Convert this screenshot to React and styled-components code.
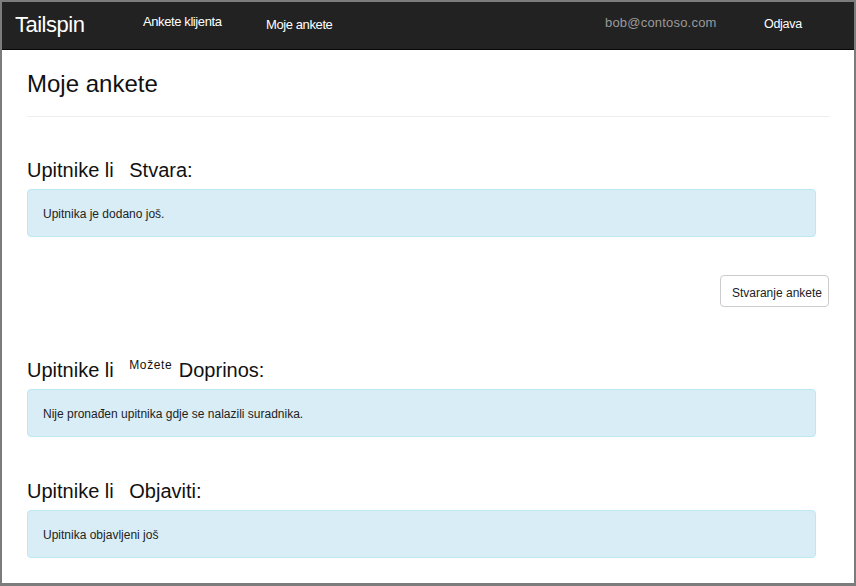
import styled, { createGlobalStyle } from "styled-components";

const GlobalStyle = createGlobalStyle`
  html, body {
    margin: 0;
    padding: 0;
    background: #fff;
  }
  body {
    font-family: "Liberation Sans", Arial, sans-serif;
  }
`;

const Frame = styled.div`
  width: 856px;
  height: 586px;
  box-sizing: border-box;
  border: 2px solid #7c7c7c;
  border-bottom-width: 3px;
  background: #fff;
  overflow: hidden;
`;

const Navbar = styled.nav`
  height: 47px;
  background: #222;
  border-bottom: 1px solid #080808;
  display: grid;
  grid-template-columns: 128px 123px 339px 159px auto;
  align-items: start;
  padding-left: 13px;
`;

const NavItem = styled.a`
  display: block;
  padding-top: ${(p) => p.$top}px;
  font-size: ${(p) => p.$size}px;
  letter-spacing: ${(p) => p.$spacing || 0}px;
  line-height: 1;
  color: ${(p) => (p.$muted ? "#9a9a9a" : "#fff")};
  white-space: nowrap;
  text-decoration: none;
`;

const Main = styled.main`
  padding: 22px 24px 0 25px;
`;

const PageTitle = styled.h1`
  margin: 0;
  font-size: 24px;
  font-weight: 400;
  line-height: 1;
  color: #111;
`;

const Rule = styled.hr`
  margin: 20px 0 0;
  border: none;
  border-top: 1px solid #eee;
`;

const Section = styled.section`
  margin-top: ${(p) => p.$gap}px;
`;

const SectionTitle = styled.h2`
  margin: 0;
  font-size: 20px;
  font-weight: 400;
  line-height: 1;
  color: #111;
  white-space: nowrap;
`;

const Verb = styled.span`
  margin-left: ${(p) => p.$indent}px;
`;

const Small = styled.span`
  margin-left: 10px;
  font-size: 12px;
  letter-spacing: 0.6px;
  line-height: 0;
  vertical-align: 8px;
`;

const Alert = styled.div`
  margin: 9px 14px 0 0;
  padding: 18px 15px 16px;
  background: #d9edf7;
  border: 1px solid #bce8f1;
  border-radius: 4px;
  font-size: 12px;
  line-height: 1;
  color: #222;
`;

const ButtonRow = styled.div`
  display: flex;
  justify-content: flex-end;
  margin-top: 38px;
  padding-right: 1px;
`;

const Button = styled.button`
  padding: 11px 6px 7px 11px;
  background: #fff;
  border: 1px solid #ccc;
  border-radius: 4px;
  font-family: "Liberation Sans", Arial, sans-serif;
  font-size: 12px;
  line-height: 1;
  color: #222;
`;

export default function App() {
  return (
    <>
      <GlobalStyle />
      <Frame>
        <Navbar>
          <NavItem $size={22} $top={12} $spacing={-0.5}>Tailspin</NavItem>
          <NavItem $size={13} $top={13} $spacing={-0.4}>Ankete klijenta</NavItem>
          <NavItem $size={13} $top={16} $spacing={-0.4}>Moje ankete</NavItem>
          <NavItem $size={13} $top={14} $spacing={0.2} $muted>bob@contoso.com</NavItem>
          <NavItem $size={12.5} $top={16} $spacing={-0.3}>Odjava</NavItem>
        </Navbar>
        <Main>
          <PageTitle>Moje ankete</PageTitle>
          <Rule />

          <Section $gap={43}>
            <SectionTitle>
              Upitnike li <Verb $indent={10}>Stvara:</Verb>
            </SectionTitle>
            <Alert>Upitnika je dodano još.</Alert>
          </Section>

          <ButtonRow>
            <Button>Stvaranje ankete</Button>
          </ButtonRow>

          <Section $gap={53}>
            <SectionTitle>
              Upitnike li <Small>Možete</Small> <Verb $indent={1}>Doprinos:</Verb>
            </SectionTitle>
            <Alert>Nije pronađen upitnika gdje se nalazili suradnika.</Alert>
          </Section>

          <Section $gap={44}>
            <SectionTitle>
              Upitnike li <Verb $indent={10}>Objaviti:</Verb>
            </SectionTitle>
            <Alert>Upitnika objavljeni još</Alert>
          </Section>
        </Main>
      </Frame>
    </>
  );
}
